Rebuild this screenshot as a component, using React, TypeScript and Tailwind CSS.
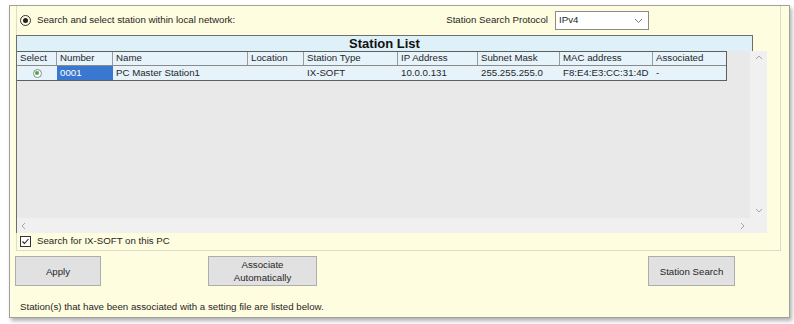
const columns = [
  { label: "Select", w: 40 },
  { label: "Number", w: 56 },
  { label: "Name", w: 135 },
  { label: "Location", w: 56 },
  { label: "Station Type", w: 94 },
  { label: "IP Address", w: 80 },
  { label: "Subnet Mask", w: 82 },
  { label: "MAC address", w: 93 },
  { label: "Associated", w: 73 },
];

const row = ["", "0001", "PC Master Station1", "", "IX-SOFT", "10.0.0.131", "255.255.255.0", "F8:E4:E3:CC:31:4D", "-"];

function Chevron({ dir }: { dir: "up" | "down" | "left" | "right" }) {
  const d = {
    up: "M1 5 L4 2 L7 5",
    down: "M1 2 L4 5 L7 2",
    left: "M5 1 L2 4 L5 7",
    right: "M2 1 L5 4 L2 7",
  }[dir];
  return (
    <svg width="8" height="8" viewBox="0 0 8 8">
      <path d={d} fill="none" stroke="#a6a6a6" strokeWidth="1" />
    </svg>
  );
}

function Button({ children, className }: { children: React.ReactNode; className: string }) {
  return (
    <div
      className={`flex h-[30px] items-center justify-center border border-[#adadad] bg-[#e1e1e1] text-center text-[9.7px] leading-[13px] text-[#262626] ${className}`}
    >
      {children}
    </div>
  );
}

export default function App() {
  return (
    <div
      className="h-[324px] w-[794px] overflow-hidden bg-white pl-[9px] pt-[5px]"
      style={{ fontFamily: '"Liberation Sans", Arial, sans-serif' }}
    >
      <div className="flex h-[313px] w-[781px] flex-col border border-[#a0a0a0] bg-[#fffddf] shadow-[2px_3px_4px_rgba(0,0,0,0.3)]">
        {/* group box */}
        <div className="ml-[6px] flex h-[245px] w-[765px] flex-col border-x border-b border-[#dcdccc]">
          <div className="flex h-[29px] items-center">
            <div className="ml-[3px] flex h-[11px] w-[11px] items-center justify-center rounded-full border border-[#333]">
              <div className="h-[5px] w-[5px] rounded-full bg-[#222]" />
            </div>
            <span className="ml-[6px] text-[9.7px] text-[#262626]">Search and select station within local network:</span>
            <div className="ml-auto mr-[131px] flex items-center">
              <span className="text-[9.7px] text-[#262626]">Station Search Protocol</span>
              <div className="ml-[7px] flex h-[19px] w-[94px] items-center justify-between border border-[#8a8a8a] bg-white pl-[3px] pr-[5px] text-[9.7px] text-[#262626]">
                <span>IPv4</span>
                <svg width="9" height="6" viewBox="0 0 9 6">
                  <path d="M1 1 L4.5 4.5 L8 1" fill="none" stroke="#777" strokeWidth="1" />
                </svg>
              </div>
            </div>
          </div>

          {/* grid */}
          <div className="-ml-px flex w-[751px] flex-col">
            <div className="flex h-[16px] w-[737px] items-center justify-center border border-b-0 border-[#6e6e6e] bg-[#def0f8] text-[13px] font-bold text-[#111]">
              Station List
            </div>
            <div className="flex h-[182px] flex-col border-l border-[#6e6e6e] bg-[#e9e9e9]">
              <div className="flex flex-1">
                <div className="flex-1">
                  <div className="w-[710px] border border-l-0 border-[#5f5f5f] bg-[#e6f3fa]">
                    <div className="flex h-[14px] border-b border-[#8a8a8a]">
                      {columns.map((c, i) => (
                        <div
                          key={c.label}
                          style={{ width: c.w }}
                          className={`flex items-center pl-[3px] text-[9.7px] text-[#262626] ${i < columns.length - 1 ? "border-r border-[#9a9a9a]" : ""}`}
                        >
                          {c.label}
                        </div>
                      ))}
                    </div>
                    <div className="flex h-[14px]">
                      {columns.map((c, i) => (
                        <div
                          key={c.label}
                          style={{ width: c.w }}
                          className={`flex items-center text-[9.7px] ${i === 0 ? "justify-center" : "pl-[3px]"} ${i === 1 ? "bg-[#3a77d0] text-white" : "text-[#262626]"}`}
                        >
                          {i === 0 ? (
                            <div className="flex h-[9px] w-[9px] items-center justify-center rounded-full border border-[#888] bg-white">
                              <div className="h-[4px] w-[4px] rounded-full bg-[#3cb043]" />
                            </div>
                          ) : (
                            row[i]
                          )}
                        </div>
                      ))}
                    </div>
                  </div>
                </div>
                <div className="flex w-[17px] flex-col items-center justify-between bg-[#f0f0f0] py-[3px]">
                  <Chevron dir="up" />
                  <Chevron dir="down" />
                </div>
              </div>
              <div className="flex h-[15px] items-center justify-between bg-[#f0f0f0] pl-[3px] pr-[20px]">
                <Chevron dir="left" />
                <Chevron dir="right" />
              </div>
            </div>
          </div>

          <div className="flex flex-1 items-center">
            <div className="ml-[3px] flex h-[11px] w-[11px] items-center justify-center border border-[#333] bg-white">
              <svg width="9" height="9" viewBox="0 0 9 9">
                <path d="M1.5 4.5 L3.5 6.5 L7.5 2" fill="none" stroke="#222" strokeWidth="1.1" />
              </svg>
            </div>
            <span className="ml-[6px] text-[9.7px] text-[#262626]">Search for IX-SOFT on this PC</span>
          </div>
        </div>

        <div className="mt-[5px] flex items-start">
          <Button className="ml-[5px] w-[86px]">Apply</Button>
          <Button className="ml-[107px] w-[109px]">
            Associate
            <br />
            Automatically
          </Button>
          <Button className="ml-[331px] w-[87px]">Station Search</Button>
        </div>

        <div className="ml-[10px] mt-[14px] text-[9.7px] text-[#262626]">
          Station(s) that have been associated with a setting file are listed below.
        </div>
      </div>
    </div>
  );
}
